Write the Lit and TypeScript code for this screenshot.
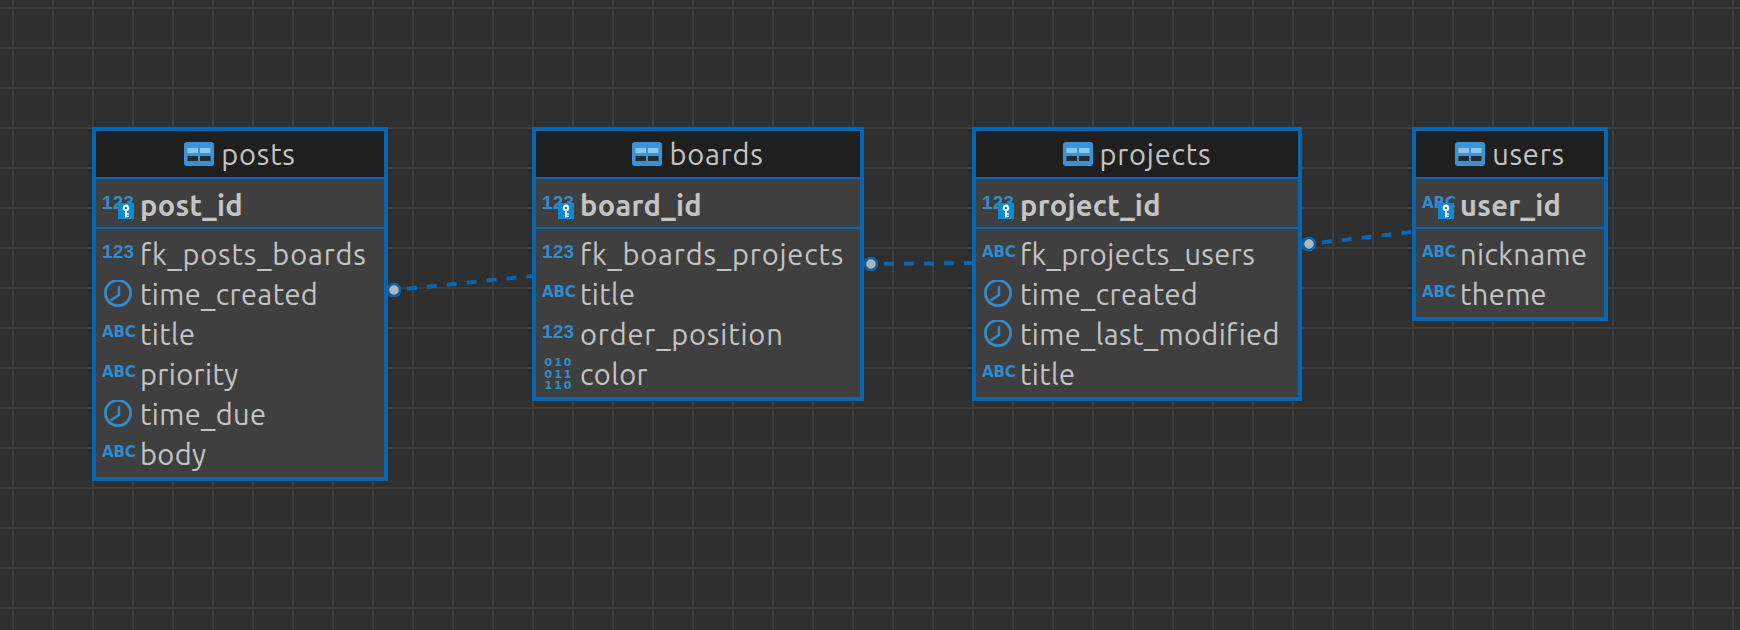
import { LitElement, html, css, svg } from "lit";
import { customElement, property } from "lit/decorators.js";

type Kind = "num" | "abc" | "time" | "bin";
interface Col { n: string; k: Kind; wide?: boolean }
interface Tbl { name: string; x: number; y: number; w: number; pk: Col; cols: Col[] }

const TABLES: Tbl[] = [
  { name: "posts", x: 92, y: 127, w: 296, pk: { n: "post_id", k: "num" }, cols: [
    { n: "fk_posts_boards", k: "num", wide: true }, { n: "time_created", k: "time" }, { n: "title", k: "abc" },
    { n: "priority", k: "abc" }, { n: "time_due", k: "time" }, { n: "body", k: "abc" } ] },
  { name: "boards", x: 532, y: 127, w: 332, pk: { n: "board_id", k: "num" }, cols: [
    { n: "fk_boards_projects", k: "num", wide: true }, { n: "title", k: "abc" }, { n: "order_position", k: "num", wide: true }, { n: "color", k: "bin" } ] },
  { name: "projects", x: 972, y: 127, w: 330, pk: { n: "project_id", k: "num" }, cols: [
    { n: "fk_projects_users", k: "abc" }, { n: "time_created", k: "time" }, { n: "time_last_modified", k: "time" }, { n: "title", k: "abc" } ] },
  { name: "users", x: 1412, y: 127, w: 196, pk: { n: "user_id", k: "abc" }, cols: [
    { n: "nickname", k: "abc" }, { n: "theme", k: "abc" } ] },
];

const LINKS = [
  { dx: 394, dy: 290, ex: 532, ey: 276 },
  { dx: 871, dy: 264, ex: 973, ey: 263 },
  { dx: 1309, dy: 244, ex: 1412, ey: 232 },
];

@customElement("col-icon")
class ColIcon extends LitElement {
  @property() kind: Kind = "abc";
  static styles = css`
    :host { display: block; width: 32px; height: 32px; position: relative; flex: none; color: #2f8ccf; }
    .t { display: block; text-align: center; font-weight: 700; white-space: nowrap; }
    .num { font-family: "Liberation Sans", sans-serif; font-size: 19px; line-height: 20px; letter-spacing: 0.2px; padding-top: 4px; }
    .abc { font-family: "DejaVu Sans", sans-serif; font-size: 15px; line-height: 20px; letter-spacing: -0.2px; padding-top: 4px; }
    .bin { font-family: "DejaVu Sans", sans-serif; font-size: 11px; line-height: 11.5px; letter-spacing: 2px; margin-top: -1px; padding-left: 2px; }
    svg { display: block; }
    .clock { margin-top: 2px; }
  `;
  render() {
    if (this.kind === "time") {
      return html`<svg class="clock" width="32" height="32" viewBox="0 0 32 32" fill="none" stroke="#2f8ccf">
        <circle cx="16" cy="13" r="12.600" stroke-width="2.800"></circle>
        <path d="M17 6.300V15L8.700 20.300" stroke-width="2.400"></path></svg>`;
    }
    if (this.kind === "bin") {
      return html`<span class="t bin">010<br />011<br />110</span>`;
    }
    return html`<span class="t ${this.kind}">${this.kind === "num" ? "123" : "ABC"}</span>`;
  }
}

@customElement("app-root")
class AppRoot extends LitElement {
  static styles = css`
    :host {
      display: block; position: relative; width: 1740px; height: 630px; overflow: hidden;
      background-color: #2f2f2f;
      background-image:
        linear-gradient(to right, #3d3d3d 2px, transparent 2px),
        linear-gradient(to bottom, #3d3d3d 2px, transparent 2px);
      background-size: 40px 40px;
      background-position: 12px 7px;
      font-family: "Ubuntu", "Noto Sans", sans-serif;
      color: #c4c4c4;
    }
    .links { position: absolute; inset: 0; }
    .table { position: absolute; box-sizing: border-box; border: 4px solid #0467b5; background: #3f3f3f; }
    .head {
      height: 46px; background: #1f1f1f; border-bottom: 2px solid #0467b5;
      display: flex; align-items: center; justify-content: center; gap: 7px;
      font-size: 29px; line-height: 44px; letter-spacing: 0.8px;
    }
    .pk { height: 50px; box-sizing: border-box; padding: 6px 0 0 6px; border-bottom: 2px solid #0467b5; }
    .pk .row { font-weight: 700; position: relative; letter-spacing: 0.3px; }
    .body { padding: 5px 0 3px 6px; }
    .row { height: 40px; display: flex; align-items: center; gap: 6px; font-size: 29px; letter-spacing: 0.4px; white-space: nowrap; }
    .row.wide { letter-spacing: 0.85px; }
    .key { position: absolute; left: 16px; top: 18px; }
  `;
  private row(c: Col, pk = false) {
    return html`<div class="row ${c.wide ? "wide" : ""}"><col-icon .kind=${c.k}></col-icon><span>${c.n}</span>${pk
      ? html`<svg class="key" width="16" height="16" viewBox="0 0 16 16">
          <rect width="16" height="16" fill="#0a8ad0"></rect>
          <path d="M8 1.500a3.400 3.400 0 0 1 1 6.600V14.500H7V8.100a3.400 3.400 0 0 1 1-6.600zM8 3.700a1.200 1.200 0 1 0 0 2.400a1.200 1.200 0 0 0 0-2.400zM9 10.500h2v1.300H9zM9 12.700h2v1.300H9z" fill="#fff" fill-rule="evenodd"></path>
        </svg>` : ""}</div>`;
  }
  private tableIcon() {
    return html`<svg width="30" height="24" viewBox="0 0 30 24">
      <rect width="30" height="24" rx="3" fill="#3a93d4"></rect>
      <rect x="3.500" y="6" width="10.500" height="5" fill="#8cc6ec"></rect>
      <rect x="16" y="6" width="10.500" height="5" fill="#8cc6ec"></rect>
      <rect x="3.500" y="14" width="10.500" height="5" fill="#1f2a33"></rect>
      <rect x="16" y="14" width="10.500" height="5" fill="#1f2a33"></rect>
    </svg>`;
  }
  render() {
    return html`
      <svg class="links" width="1740" height="630">
        ${LINKS.map(l => svg`
          <line x1=${l.dx} y1=${l.dy} x2=${l.ex} y2=${l.ey} stroke="#0467b5" stroke-width="4" stroke-dasharray="10 10" stroke-dashoffset="-13"></line>
          <circle cx=${l.dx} cy=${l.dy} r="6" fill="#b4b4b4" stroke="#0467b5" stroke-width="2.500"></circle>`)}
      </svg>
      ${TABLES.map(t => html`
        <div class="table" style="left:${t.x}px;top:${t.y}px;width:${t.w}px">
          <div class="head">${this.tableIcon()}<span>${t.name}</span></div>
          <div class="pk">${this.row(t.pk, true)}</div>
          <div class="body">${t.cols.map(c => this.row(c))}</div>
        </div>`)}
    `;
  }
}
